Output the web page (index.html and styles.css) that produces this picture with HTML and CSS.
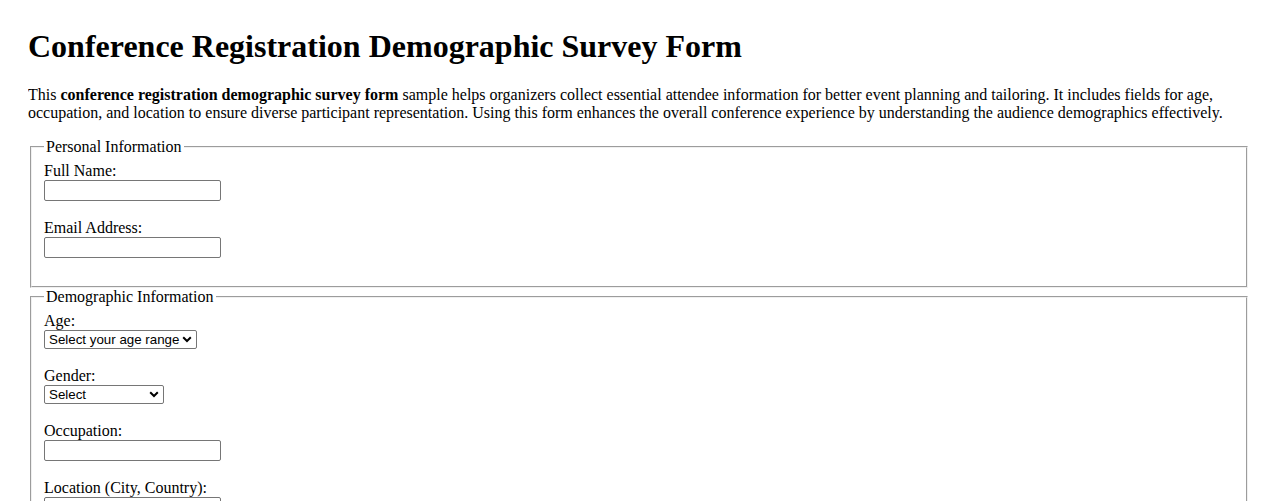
FILE: index.html
```html
<!DOCTYPE html>
<html lang="en">
<head>
<meta charset="utf-8">
<title>Conference Registration Demographic Survey Form</title>
<link rel="stylesheet" href="styles.css">
</head>
<body>
<h1 class="title">Conference Registration Demographic Survey Form</h1>
<p class="intro">This <strong>conference registration demographic survey form</strong> sample helps organizers collect essential attendee information for better event planning and tailoring. It includes fields for age, occupation, and location to ensure diverse participant representation. Using this form enhances the overall conference experience by understanding the audience demographics effectively.</p>
<form class="survey">
  <fieldset class="group">
    <legend class="group-title">Personal Information</legend>
    <label class="field-label" for="fullname">Full Name:</label><br>
    <input class="text-input" type="text" id="fullname" name="fullname"><br><br>
    <label class="field-label" for="email">Email Address:</label><br>
    <input class="text-input" type="email" id="email" name="email"><br><br>
  </fieldset>
  <fieldset class="group">
    <legend class="group-title">Demographic Information</legend>
    <label class="field-label" for="age">Age:</label><br>
    <select class="select-input select-age" id="age" name="age">
      <option>Select your age range</option>
      <option>18-24</option>
      <option>25-34</option>
      <option>35-44</option>
      <option>45-54</option>
      <option>55+</option>
    </select><br><br>
    <label class="field-label" for="gender">Gender:</label><br>
    <select class="select-input select-gender" id="gender" name="gender">
      <option>Select</option>
      <option>Male</option>
      <option>Female</option>
      <option>Non-binary</option>
      <option>Prefer not to say</option>
    </select><br><br>
    <label class="field-label" for="occupation">Occupation:</label><br>
    <input class="text-input" type="text" id="occupation" name="occupation"><br><br>
    <label class="field-label" for="location">Location (City, Country):</label><br>
    <input class="text-input" type="text" id="location" name="location"><br><br>
  </fieldset>
</form>
</body>
</html>
```
FILE: styles.css
```css
html {
  background: #ffffff;
}
body {
  margin: 28px;
  font-family: "Liberation Serif", "Times New Roman", serif;
  font-size: 16px;
  color: #000000;
}
.title {
  font-size: 32px;
  font-weight: bold;
  margin: 0 0 21.44px;
}
.intro {
  margin: 16px 0;
}
.survey {
  margin: 0;
}
.group {
  margin: 0 2px;
  padding: 0.35em 0.75em 0.625em;
  border: 2px groove #f0f0f0;
}
.group-title {
  padding: 0 2px;
}
.text-input {
  box-sizing: border-box;
  width: 177px;
  height: 21px;
  padding: 1px 2px;
  border: 1px solid #767676;
  border-radius: 2px;
  font-family: "Liberation Sans", Arial, sans-serif;
  font-size: 13.33px;
  background: #ffffff;
}
.select-input {
  -webkit-appearance: none;
  appearance: none;
  box-sizing: border-box;
  height: 19px;
  padding: 0 16px 0 4px;
  border: 1px solid #767676;
  border-radius: 2px;
  font-family: "Liberation Sans", Arial, sans-serif;
  font-size: 13.33px;
  line-height: 17px;
  color: #000000;
  background-color: #ffffff;
  background-image: url("data:image/svg+xml,%3Csvg xmlns='http://www.w3.org/2000/svg' width='10' height='7' viewBox='0 0 10 7'%3E%3Cpath d='M1.2 1.3 L5 5 L8.8 1.3' fill='none' stroke='%23000' stroke-width='2'/%3E%3C/svg%3E");
  background-repeat: no-repeat;
  background-position: right 4px center;
  background-size: 10px 7px;
}
.select-age {
  width: 153px;
}
.select-gender {
  width: 120px;
}
```
